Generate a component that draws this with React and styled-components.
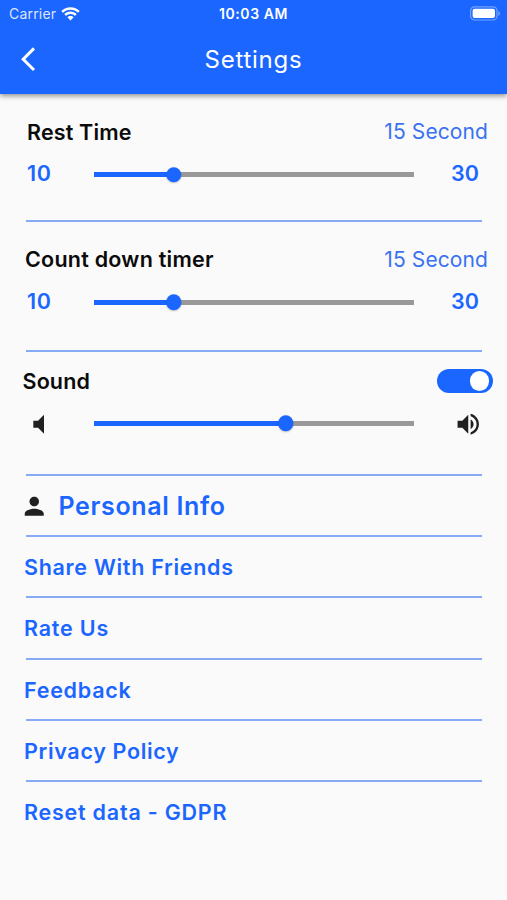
import React, { useState } from "react";
import styled, { createGlobalStyle } from "styled-components";

const BLUE = "#1a66ff";

const GlobalStyle = createGlobalStyle`
  * { box-sizing: border-box; }
  body {
    margin: 0;
    background: #fafafa;
    font-family: Inter, "Liberation Sans", sans-serif;
  }
`;

const Screen = styled.div`
  width: 507px;
  height: 900px;
  overflow: hidden;
  background: #fafafa;
`;

const Header = styled.header`
  position: relative;
  height: 94px;
  background: ${BLUE};
  color: #fff;
  box-shadow: 0 2px 5px rgba(0, 0, 0, 0.42);
`;

const StatusBar = styled.div`
  display: grid;
  grid-template-columns: 1fr auto 1fr;
  align-items: center;
  height: 27px;
  padding: 0 6px;
`;

const Carrier = styled.div`
  display: flex;
  align-items: center;
  gap: 5px;
  padding-left: 3px;
  font-size: 14px;
  letter-spacing: 0.2px;
  color: rgba(255, 255, 255, 0.86);
`;

const Clock = styled.div`
  font-size: 14px;
  font-weight: 600;
  letter-spacing: 0.55px;
`;

const BatteryIcon = styled.svg`
  justify-self: end;
`;

const NavBar = styled.div`
  display: grid;
  grid-template-columns: 56px 1fr 56px;
  align-items: center;
  height: 65px;
`;

const BackButton = styled.button`
  display: flex;
  padding: 0;
  margin-left: 13.5px;
  border: 0;
  background: none;
  color: #fff;
`;

const Title = styled.h1`
  margin: 0;
  text-align: center;
  font-size: 24px;
  font-weight: 400;
  letter-spacing: 0.75px;
`;

const Icon = styled.svg`
  display: block;
  flex: none;
  fill: currentColor;
`;

const Section = styled.section`
  height: ${(p) => p.$height}px;
  padding-top: ${(p) => p.$top}px;
`;

const SectionHead = styled.div`
  display: flex;
  align-items: center;
  justify-content: space-between;
  height: 28px;
  padding: 0 ${(p) => p.$right}px 0 ${(p) => p.$left}px;
`;

const Label = styled.h2`
  margin: 0;
  color: #0b0b0b;
  font-size: 21.5px;
  font-weight: 600;
  letter-spacing: ${(p) => p.$spacing}px;
`;

const Value = styled.span`
  color: #3872f0;
  font-size: 21px;
  font-weight: 400;
  letter-spacing: 0.1px;
`;

const SliderRow = styled.div`
  display: grid;
  grid-template-columns: 93.5px 320.5px 1fr;
  align-items: center;
  height: 32px;
  margin-top: ${(p) => p.$top}px;
`;

const Bound = styled.span`
  padding: 0 0 3px ${(p) => p.$left}px;
  color: ${BLUE};
  font-size: 21.5px;
  font-weight: 600;
  letter-spacing: ${(p) => p.$spacing || 0}px;
`;

const VolumeSlot = styled.span`
  padding: 2px 0 0 ${(p) => p.$left}px;
  color: #202020;
`;

const Track = styled.div`
  position: relative;
  height: 5px;
  background: #999;
`;

const Fill = styled.div`
  height: 5px;
  background: ${BLUE};
`;

const Knob = styled.div`
  position: absolute;
  top: 50%;
  width: 15.5px;
  height: 15.5px;
  border-radius: 50%;
  background: ${BLUE};
  transform: translate(-50%, -50%);
  box-shadow: 0 1px 2px rgba(0, 0, 0, 0.2);
`;

const Toggle = styled.button`
  display: flex;
  align-items: center;
  justify-content: ${(p) => (p.$on ? "flex-end" : "flex-start")};
  width: 56px;
  height: 24.5px;
  padding: 0 4px;
  border: 0;
  border-radius: 13px;
  background: ${(p) => (p.$on ? BLUE : "#999")};
`;

const ToggleKnob = styled.span`
  width: 19.5px;
  height: 19.5px;
  border-radius: 50%;
  background: #fff;
`;

const Divider = styled.hr`
  height: 2px;
  margin: 0 25px 0 26px;
  border: 0;
  background: #86abf6;
`;

const MenuItem = styled.a`
  display: flex;
  align-items: center;
  gap: 10px;
  height: 59.2px;
  padding: 1px 0 0 ${(p) => (p.$large ? 20 : 24)}px;
  color: ${BLUE};
  font-size: ${(p) => (p.$large ? 25 : 21.5)}px;
  font-weight: 600;
  letter-spacing: ${(p) => p.$spacing}px;
`;

const PersonIcon = styled(Icon)`
  color: #202020;
`;

function Slider({ percent }) {
  return (
    <Track>
      <Fill style={{ width: `${percent}%` }} />
      <Knob style={{ left: `${percent}%` }} />
    </Track>
  );
}

const timers = [
  { label: "Rest Time", spacing: 0.15, left: 27, height: 126, top: 23.5 },
  { label: "Count down timer", spacing: 0.24, left: 25, height: 128, top: 23 },
];

const links = [
  { text: "Share With Friends", spacing: 0.7 },
  { text: "Rate Us", spacing: 0.8 },
  { text: "Feedback", spacing: 0.75 },
  { text: "Privacy Policy", spacing: 0.67 },
  { text: "Reset data - GDPR", spacing: 0.77 },
];

export default function App() {
  const [sound, setSound] = useState(true);
  return (
    <Screen>
      <GlobalStyle />
      <Header>
        <StatusBar>
          <Carrier>
            Carrier
            <svg width="19" height="14" viewBox="0 0 19 14" fill="#fff">
              <path d="M9.5 0.3C13.1 0.3 16.4 1.7 18.7 4L17 5.8C15 3.9 12.4 2.8 9.5 2.8S4 3.9 2 5.8L0.3 4C2.6 1.7 5.9 0.3 9.5 0.3Z" />
              <path d="M9.5 4.6C11.9 4.6 14.1 5.5 15.7 7.1L13.9 8.9C12.8 7.8 11.2 7.1 9.5 7.1S6.2 7.8 5.1 8.9L3.3 7.1C4.9 5.5 7.1 4.6 9.5 4.6Z" />
              <path d="M9.5 8.9C10.7 8.9 11.8 9.4 12.6 10.2L9.5 13.4L6.4 10.2C7.2 9.4 8.3 8.9 9.5 8.9Z" />
            </svg>
          </Carrier>
          <Clock>10:03 AM</Clock>
          <BatteryIcon width="31" height="15" viewBox="0 0 31 15">
            <rect x="0.6" y="0.8" width="26.4" height="13.2" rx="4" fill="none" stroke="#fff" strokeOpacity="0.4" strokeWidth="1.2" />
            <rect x="2.6" y="2.8" width="22.4" height="9.2" rx="2" fill="#fff" />
            <path d="M28.3 5v5c1-.4 1.7-1.4 1.7-2.5S29.3 5.4 28.3 5Z" fill="#fff" fillOpacity="0.4" />
          </BatteryIcon>
        </StatusBar>
        <NavBar>
          <BackButton aria-label="Back">
            <Icon width="28.4" height="28.4" viewBox="0 0 24 24">
              <path d="M17.77 3.77 16 2 6 12l10 10 1.77-1.77L9.54 12z" />
            </Icon>
          </BackButton>
          <Title>Settings</Title>
        </NavBar>
      </Header>

      {timers.map((t) => (
        <React.Fragment key={t.label}>
          <Section $height={t.height} $top={t.top}>
            <SectionHead $left={t.left} $right={19}>
              <Label $spacing={t.spacing}>{t.label}</Label>
              <Value>15 Second</Value>
            </SectionHead>
            <SliderRow $top={13}>
              <Bound $left={27} $spacing={0.6}>10</Bound>
              <Slider percent={25} />
              <Bound $left={37}>30</Bound>
            </SliderRow>
          </Section>
          <Divider />
        </React.Fragment>
      ))}

      <Section $height={122} $top={15}>
        <SectionHead $left={22.5} $right={14}>
          <Label $spacing={0.15}>Sound</Label>
          <Toggle $on={sound} onClick={() => setSound(!sound)} aria-label="Sound">
            <ToggleKnob />
          </Toggle>
        </SectionHead>
        <SliderRow $top={12.4}>
          <VolumeSlot $left={25.4}>
            <Icon width="28.5" height="28.5" viewBox="0 0 24 24">
              <path d="M7 9v6h4l5 5V4l-5 5H7z" />
            </Icon>
          </VolumeSlot>
          <Slider percent={60} />
          <VolumeSlot $left={40}>
            <Icon width="28.5" height="28.5" viewBox="0 0 24 24">
              <path d="M3 9v6h4l5 5V4L7 9H3zm13.5 3c0-1.77-1.02-3.29-2.5-4.03v8.05c1.48-.73 2.5-2.25 2.5-4.02zM14 3.23v2.06c2.89.86 5 3.54 5 6.71s-2.11 5.85-5 6.71v2.06c4.01-.91 7-4.49 7-8.77s-2.99-7.86-7-8.77z" />
            </Icon>
          </VolumeSlot>
        </SliderRow>
      </Section>
      <Divider />

      <MenuItem $large $spacing={0.65}>
        <PersonIcon width="28.5" height="28.5" viewBox="0 0 24 24">
          <path d="M12 12c2.21 0 4-1.79 4-4s-1.79-4-4-4-4 1.79-4 4 1.79 4 4 4zm0 2c-2.67 0-8 1.34-8 4v2h16v-2c0-2.66-5.33-4-8-4z" />
        </PersonIcon>
        <span>Personal Info</span>
      </MenuItem>
      {links.map((l) => (
        <React.Fragment key={l.text}>
          <Divider />
          <MenuItem $spacing={l.spacing}>{l.text}</MenuItem>
        </React.Fragment>
      ))}
    </Screen>
  );
}
